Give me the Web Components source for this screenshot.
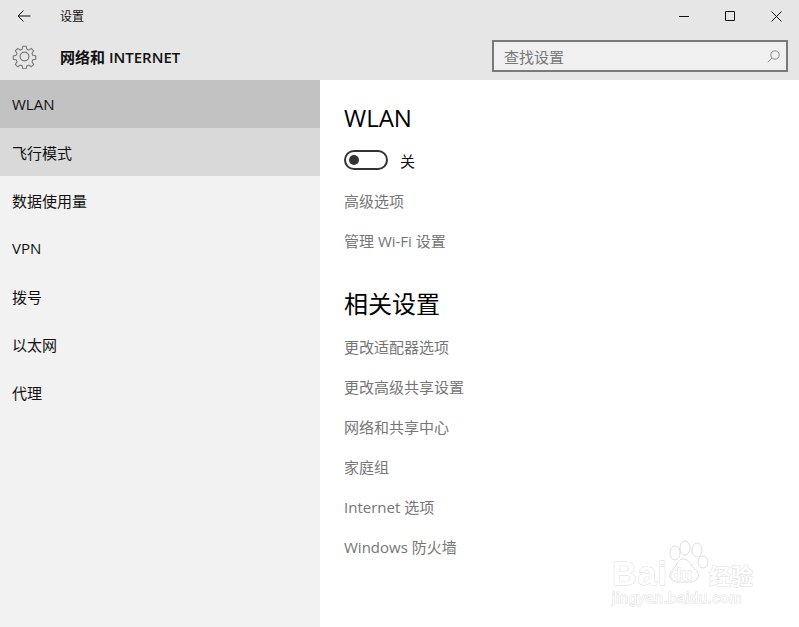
<!DOCTYPE html>
<html>
<head>
<meta charset="utf-8">
<title>设置</title>
<style>
    html, body { margin: 0; height: 100%; background: #fff; overflow: hidden; }
    body { font-family: "Open Sans", "Noto Sans CJK SC", sans-serif; }
</style>
</head>
<body>
<settings-app></settings-app>

<script>
const FONT = `"Open Sans", "Noto Sans CJK SC", sans-serif`

class TitleBar extends HTMLElement
{
    constructor()
    {
        super()
        this.attachShadow({mode:"open"}).innerHTML = `
        <style>
            :host { display: flex; align-items: center; height: 32px; font: 12px ${FONT}; color: #111; }
            .back { width: 48px; display: flex; justify-content: center; }
            .title { flex: 1; padding-left: 12px; }
            .ctl { width: 46px; display: flex; justify-content: center; }
            svg { display: block; fill: none; stroke: #111; }
        </style>
        <div class="back"><svg width="14" height="12" viewBox="0 0 14 12"><path d="M13.5 6H1M6.5 .5 1 6l5.5 5.5"/></svg></div>
        <div class="title">设置</div>
        <div class="ctl"><svg width="10" height="10" viewBox="0 0 10 10"><path d="M0 5.5h10"/></svg></div>
        <div class="ctl"><svg width="10" height="10" viewBox="0 0 10 10"><path d="M.5 .5h9v9h-9z"/></svg></div>
        <div class="ctl"><svg width="11" height="11" viewBox="0 0 11 11"><path d="M.5 .5l10 10M10.5 .5l-10 10"/></svg></div>
        `
    }
}

class SearchBox extends HTMLElement
{
    constructor()
    {
        super()
        this.attachShadow({mode:"open"}).innerHTML = `
        <style>
            :host { display: flex; align-items: center; box-sizing: border-box; width: 296px; height: 32px; border: 2px solid #7a7a7a; background: #f0f0f0; padding: 0 6px 0 10px; font: 15px ${FONT}; color: #777; }
            span { flex: 1; }
            svg { display: block; fill: none; stroke: #8a8a8a; }
        </style>
        <span><slot></slot></span>
        <svg width="13" height="13" viewBox="0 0 13 13"><circle cx="8" cy="5" r="4.2"/><path d="M5 8 .8 12.2"/></svg>
        `
    }
}

class PageHeader extends HTMLElement
{
    constructor()
    {
        super()
        this.attachShadow({mode:"open"}).innerHTML = `
        <style>
            :host { display: flex; align-items: center; height: 48px; padding: 0 11px 0 12px; font: 600 15px ${FONT}; color: #111; }
            svg { display: block; fill: none; stroke: #777; stroke-width: 1.2; }
            .name { flex: 1; padding-left: 23px; }
        </style>
        <svg width="25" height="25" viewBox="0 0 25 25"><circle cx="12.5" cy="12.5" r="4.4"/><path d="M10.6 1.2h3.8l.6 3.2 2.3 1 2.7-1.9 2.7 2.7-1.9 2.7 1 2.3 3.2.6v3.8l-3.2.6-1 2.3 1.9 2.7-2.7 2.7-2.7-1.9-2.3 1-.6 3.2h-3.8l-.6-3.2-2.3-1-2.7 1.9-2.7-2.7 1.9-2.7-1-2.3-3.2-.6v-3.8l3.2-.6 1-2.3-1.9-2.7 2.7-2.7 2.7 1.9 2.3-1z" transform="translate(1.25 1.25) scale(.9)"/></svg>
        <div class="name"><slot></slot></div>
        <search-box>查找设置</search-box>
        `
    }
}

class NavItem extends HTMLElement
{
    constructor()
    {
        super()
        this.attachShadow({mode:"open"}).innerHTML = `
        <style>
            :host { display: flex; align-items: center; height: 48px; padding-left: 12px; font: 15px ${FONT}; color: #111; }
            :host([selected]) { background: #c2c2c2; }
            :host([hover]) { background: #d9d9d9; }
        </style>
        <slot></slot>
        `
    }
}

class SettingLink extends HTMLElement
{
    constructor()
    {
        super()
        this.attachShadow({mode:"open"}).innerHTML = `
        <style>
            :host { display: flex; align-items: center; height: 40px; font: 15px ${FONT}; color: #767676; }
        </style>
        <slot></slot>
        `
    }
}

class ToggleSwitch extends HTMLElement
{
    constructor()
    {
        super()
        this.attachShadow({mode:"open"}).innerHTML = `
        <style>
            :host { display: flex; align-items: center; gap: 12px; height: 20px; font: 15px ${FONT}; color: #111; }
            .track { box-sizing: border-box; width: 44px; height: 20px; border: 2px solid #333; border-radius: 10px; display: flex; align-items: center; padding-left: 3px; }
            .knob { width: 10px; height: 10px; border-radius: 50%; background: #333; }
        </style>
        <div class="track"><div class="knob"></div></div>
        <slot></slot>
        `
    }
}

class BaiduMark extends HTMLElement
{
    constructor()
    {
        super()
        this.attachShadow({mode:"open"}).innerHTML = `
        <style>
            :host { position: absolute; left: 612px; top: 540px; width: 145px; height: 70px; color: #fff; font-family: "Liberation Sans", "Noto Sans CJK SC", sans-serif; pointer-events: none; }
            div { position: absolute; white-space: nowrap; -webkit-text-stroke: 1px #dedede; paint-order: stroke fill; }
            .bai { left: 0; top: 15px; font: 700 34px/36px "Liberation Sans", sans-serif; letter-spacing: 1px; }
            .du { left: 59px; top: 26px; font: 700 17px/18px "Liberation Sans", sans-serif; }
            .cn { left: 97px; top: 21px; font: 700 22px/26px "Noto Sans CJK SC", sans-serif; }
            .url { left: 0; top: 49px; font: 15px/18px "Liberation Sans", sans-serif; letter-spacing: .55px; }
            svg { position: absolute; left: 48px; top: 0; fill: #fff; stroke: #dedede; }
        </style>
        <svg width="50" height="46" viewBox="0 0 50 46">
            <ellipse cx="15" cy="13" rx="5" ry="7"/>
            <ellipse cx="25" cy="8" rx="5" ry="7"/>
            <ellipse cx="37" cy="10" rx="5" ry="7"/>
            <ellipse cx="43" cy="22" rx="5" ry="6"/>
            <path d="M23 19c6 0 7 5 11 9s6 7 3 11-8 3-13 3-10 1-13-3 0-8 3-11 4-9 9-9z"/>
        </svg>
        <div class="bai">Bai</div>
        <div class="du">du</div>
        <div class="cn">经验</div>
        <div class="url">jingyan.baidu.com</div>
        `
    }
}

class SettingsApp extends HTMLElement
{
    constructor()
    {
        super()
        this.attachShadow({mode:"open"}).innerHTML = `
        <style>
            * { box-sizing: border-box; }
            :host { display: block; position: relative; width: 799px; height: 627px; overflow: hidden; font-family: ${FONT}; }
            header { background: #e6e6e6; height: 80px; }
            .body { display: flex; height: 547px; }
            nav { width: 320px; background: #f2f2f2; }
            main { flex: 1; background: #fff; padding: 16px 24px 0; }
            h1, h2 { margin: 0; font-weight: 400; color: #000; font-size: 24px; display: flex; align-items: center; }
            h1 { height: 42px; }
            h2 { height: 44px; margin-top: 20px; }
            toggle-switch { margin: 12px 0 10px; }
            .links { margin-top: 2px; }
        </style>
        <header>
            <title-bar></title-bar>
            <page-header>网络和 INTERNET</page-header>
        </header>
        <div class="body">
            <nav>
                <nav-item selected>WLAN</nav-item>
                <nav-item hover>飞行模式</nav-item>
                <nav-item>数据使用量</nav-item>
                <nav-item>VPN</nav-item>
                <nav-item>拨号</nav-item>
                <nav-item>以太网</nav-item>
                <nav-item>代理</nav-item>
            </nav>
            <main>
                <h1>WLAN</h1>
                <toggle-switch>关</toggle-switch>
                <setting-link>高级选项</setting-link>
                <setting-link>管理 Wi-Fi 设置</setting-link>
                <h2>相关设置</h2>
                <div class="links">
                    <setting-link>更改适配器选项</setting-link>
                    <setting-link>更改高级共享设置</setting-link>
                    <setting-link>网络和共享中心</setting-link>
                    <setting-link>家庭组</setting-link>
                    <setting-link>Internet 选项</setting-link>
                    <setting-link>Windows 防火墙</setting-link>
                </div>
            </main>
        </div>
        <baidu-mark></baidu-mark>
        `
    }
}

customElements.define("title-bar", TitleBar)
customElements.define("search-box", SearchBox)
customElements.define("page-header", PageHeader)
customElements.define("nav-item", NavItem)
customElements.define("setting-link", SettingLink)
customElements.define("toggle-switch", ToggleSwitch)
customElements.define("baidu-mark", BaiduMark)
customElements.define("settings-app", SettingsApp)
</script>
</body>
</html>
